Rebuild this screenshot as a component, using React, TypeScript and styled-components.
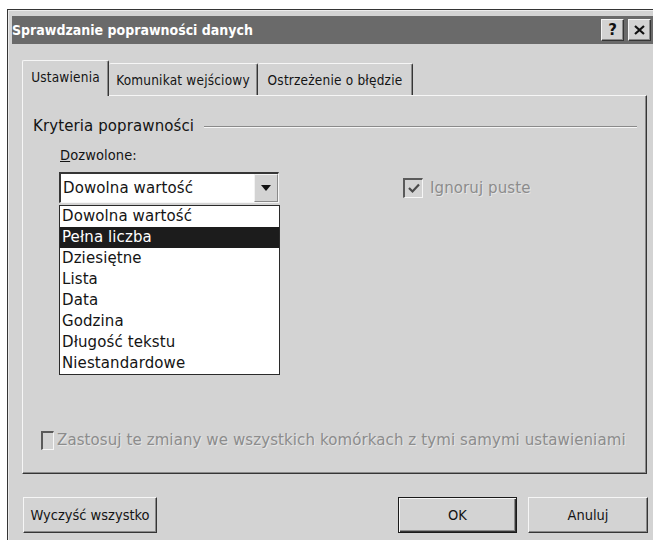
import React from "react";
import styled, { createGlobalStyle } from "styled-components";

const face = "#d3d3d3";
const shadow = "#8a8a8a";
const dark = "#353535";

const GlobalStyle = createGlobalStyle`
  html, body {
    margin: 0;
    padding: 0;
    background: #ffffff;
    overflow: hidden;
  }
  body {
    font-family: "DejaVu Sans", "Liberation Sans", sans-serif;
    color: #141414;
  }
`;

const Window = styled.div`
  margin: 9px 0 0 7px;
  width: 652px;
  height: 540px;
  box-sizing: border-box;
  border-top: 1px solid ${dark};
  border-left: 1px solid ${dark};
  box-shadow: inset 1px 1px 0 #ececec;
  background: ${face};
  padding: 6px 0 0 4px;
  display: flex;
  flex-direction: column;
`;

const TitleBar = styled.div`
  width: 641px;
  height: 28px;
  box-sizing: border-box;
  background: #6a6a6a;
  display: flex;
  align-items: center;
  padding: 0 2px 0 0;
`;

const Title = styled.div`
  flex: 1;
  color: #ffffff;
  font-family: "DejaVu Sans Condensed", "DejaVu Sans", sans-serif;
  font-stretch: condensed;
  font-weight: bold;
  font-size: 14px;
`;

const CaptionButton = styled.div`
  width: 23px;
  height: 22px;
  box-sizing: border-box;
  margin-left: 4px;
  background: ${face};
  border-top: 1px solid #f4f4f4;
  border-left: 1px solid #f4f4f4;
  border-right: 1px solid ${dark};
  border-bottom: 1px solid ${dark};
  box-shadow: inset -1px -1px 0 ${shadow};
  display: flex;
  align-items: center;
  justify-content: center;
  font-weight: bold;
  font-size: 15px;
  color: #111;
`;

const Tabs = styled.div`
  display: flex;
  align-items: flex-end;
  height: 35px;
  margin: 16px 0 0 10px;
  position: relative;
  z-index: 1;
`;

const Tab = styled.div<{ $w: number; $active?: boolean }>`
  width: ${({ $w }) => $w}px;
  height: ${({ $active }) => ($active ? 36 : 32)}px;
  margin-bottom: ${({ $active }) => ($active ? -1 : 0)}px;
  box-sizing: border-box;
  background: ${face};
  border-top: 1px solid #f6f6f6;
  border-left: ${({ $active }) => ($active ? "1px solid #f6f6f6" : "none")};
  border-right: 1px solid ${dark};
  box-shadow: inset -1px 0 0 ${shadow};
  border-radius: 2px 2px 0 0;
  display: flex;
  align-items: center;
  justify-content: center;
  padding-bottom: ${({ $active }) => ($active ? 3 : 0)}px;
  font-family: "DejaVu Sans Condensed", "DejaVu Sans", sans-serif;
  font-stretch: condensed;
  font-size: 13.5px;
  letter-spacing: 0.2px;
  white-space: nowrap;
`;

const Panel = styled.div`
  width: 625px;
  height: 379px;
  margin-left: 10px;
  box-sizing: border-box;
  border-top: 1px solid #f6f6f6;
  border-left: 1px solid #f6f6f6;
  border-right: 1px solid ${dark};
  border-bottom: 1px solid ${dark};
  box-shadow: inset -1px -1px 0 ${shadow};
  display: flex;
  flex-direction: column;
  padding: 20px 9px 23px 10px;
  font-size: 15px;
  letter-spacing: 0.1px;
`;

const GroupHead = styled.div`
  display: flex;
  align-items: center;
  height: 20px;
  white-space: nowrap;
`;

const GroupLine = styled.div`
  flex: 1;
  height: 1px;
  margin-left: 10px;
  background: ${shadow};
  box-shadow: 0 1px 0 #f6f6f6;
`;

const Label = styled.div`
  height: 20px;
  line-height: 20px;
  margin: 9px 0 0 27px;
  font-family: "DejaVu Sans Condensed", "DejaVu Sans", sans-serif;
  font-stretch: condensed;
  font-size: 14.5px;
`;

const Mnemonic = styled.span`
  text-decoration: underline;
`;

const FieldRow = styled.div`
  display: flex;
  align-items: center;
  margin: 7px 0 0 26px;
`;

const Combo = styled.div`
  position: relative;
  width: 220px;
  height: 31px;
  box-sizing: border-box;
  background: #ffffff;
  border-top: 2px solid ${dark};
  border-left: 2px solid ${dark};
  border-right: 1px solid #f6f6f6;
  border-bottom: 1px solid #f6f6f6;
  display: flex;
  align-items: center;
`;

const ComboValue = styled.div`
  flex: 1;
  padding-left: 2px;
  white-space: nowrap;
`;

const DropButton = styled.div`
  width: 24px;
  height: 100%;
  box-sizing: border-box;
  background: ${face};
  border-left: 1px solid #f2f2f2;
  border-top: 1px solid #f2f2f2;
  border-right: 1px solid ${shadow};
  border-bottom: 1px solid ${shadow};
  display: flex;
  align-items: center;
  justify-content: center;
`;

const Arrow = styled.div`
  width: 0;
  height: 0;
  border-left: 5px solid transparent;
  border-right: 5px solid transparent;
  border-top: 6px solid #111;
`;

const DropList = styled.div`
  position: absolute;
  top: 31px;
  left: -2px;
  width: 221px;
  box-sizing: border-box;
  background: #ffffff;
  border: 1px solid #2a2a2a;
  z-index: 5;
`;

const Option = styled.div<{ $selected?: boolean }>`
  height: 21px;
  line-height: 21px;
  padding-left: 2px;
  white-space: nowrap;
  background: ${({ $selected }) => ($selected ? "#1c1c1c" : "transparent")};
  color: ${({ $selected }) => ($selected ? "#ffffff" : "#141414")};
`;

const Check = styled.div<{ $w: number; $h: number }>`
  width: ${({ $w }) => $w}px;
  height: ${({ $h }) => $h}px;
  box-sizing: border-box;
  background: ${face};
  border-top: 2px solid #5a5a5a;
  border-left: 2px solid #5a5a5a;
  border-right: 1px solid #f6f6f6;
  border-bottom: 1px solid #f6f6f6;
  display: flex;
  align-items: center;
  justify-content: center;
  flex-shrink: 0;
`;

const CheckLabel = styled.div<{ $gap: number }>`
  color: #8c8c8c;
  text-shadow: 1px 1px 0 #e6e6e6;
  margin-left: ${({ $gap }) => $gap}px;
  white-space: nowrap;
`;

const IgnoreBox = styled.div`
  display: flex;
  align-items: center;
  margin-left: 124px;
`;

const ApplyRow = styled.div`
  display: flex;
  align-items: center;
  height: 20px;
  margin: auto 0 0 8px;
`;

const Footer = styled.div`
  display: flex;
  align-items: center;
  margin: 23px 0 0 11px;
  width: 625px;
`;

const Button = styled.div<{ $w: number; $default?: boolean }>`
  width: ${({ $w }) => $w}px;
  height: 36px;
  box-sizing: border-box;
  background: ${face};
  border-top: 1px solid ${({ $default }) => ($default ? "#1a1a1a" : "#f6f6f6")};
  border-left: 1px solid ${({ $default }) => ($default ? "#1a1a1a" : "#f6f6f6")};
  border-right: 1px solid ${({ $default }) => ($default ? "#1a1a1a" : dark)};
  border-bottom: 1px solid ${({ $default }) => ($default ? "#1a1a1a" : dark)};
  box-shadow: ${({ $default }) =>
    $default
      ? `inset 1px 1px 0 #f6f6f6, inset -1px -1px 0 ${dark}, inset -2px -2px 0 ${shadow}`
      : `inset -1px -1px 0 ${shadow}`};
  display: flex;
  align-items: center;
  justify-content: center;
  font-family: "DejaVu Sans Condensed", "DejaVu Sans", sans-serif;
  font-stretch: condensed;
  font-size: 14.5px;
  margin-right: ${({ $default }) => ($default ? 11 : 0)}px;
`;

const Spacer = styled.div`
  flex: 1;
`;

const options = [
  "Dowolna wartość",
  "Pełna liczba",
  "Dziesiętne",
  "Lista",
  "Data",
  "Godzina",
  "Długość tekstu",
  "Niestandardowe",
];

const Tick = () => (
  <svg width="12" height="11" viewBox="0 0 12 11">
    <path d="M1 5 L4.5 8.5 L11 1.5" fill="none" stroke="#4a4a4a" strokeWidth="2.2" />
  </svg>
);

export default function App() {
  return (
    <>
      <GlobalStyle />
      <Window>
        <TitleBar>
          <Title>Sprawdzanie poprawności danych</Title>
          <CaptionButton>?</CaptionButton>
          <CaptionButton>
            <svg width="11" height="10" viewBox="0 0 11 10">
              <path d="M1 1 L10 9 M10 1 L1 9" stroke="#111" strokeWidth="2.2" />
            </svg>
          </CaptionButton>
        </TitleBar>

        <Tabs>
          <Tab $w={87} $active>
            Ustawienia
          </Tab>
          <Tab $w={149}>Komunikat wejściowy</Tab>
          <Tab $w={155}>Ostrzeżenie o błędzie</Tab>
        </Tabs>

        <Panel>
          <GroupHead>
            Kryteria poprawności
            <GroupLine />
          </GroupHead>
          <Label>
            <Mnemonic>D</Mnemonic>ozwolone:
          </Label>
          <FieldRow>
            <Combo>
              <ComboValue>Dowolna wartość</ComboValue>
              <DropButton>
                <Arrow />
              </DropButton>
              <DropList>
                {options.map((o) => (
                  <Option key={o} $selected={o === "Pełna liczba"}>
                    {o}
                  </Option>
                ))}
              </DropList>
            </Combo>
            <IgnoreBox>
              <Check $w={20} $h={20}>
                <Tick />
              </Check>
              <CheckLabel $gap={7}>Ignoruj puste</CheckLabel>
            </IgnoreBox>
          </FieldRow>
          <ApplyRow>
            <Check $w={13} $h={19} />
            <CheckLabel $gap={3}>
              Zastosuj te zmiany we wszystkich komórkach z tymi samymi
              ustawieniami
            </CheckLabel>
          </ApplyRow>
        </Panel>

        <Footer>
          <Button $w={134}>Wyczyść wszystko</Button>
          <Spacer />
          <Button $w={119} $default>
            OK
          </Button>
          <Button $w={120}>Anuluj</Button>
        </Footer>
      </Window>
    </>
  );
}
